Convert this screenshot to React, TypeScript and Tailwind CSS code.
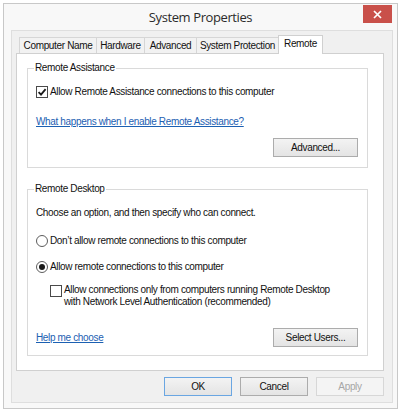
import React from 'react';

function CheckBox({ checked }: { checked?: boolean }) {
  return (
    <span className="flex h-[12px] w-[12px] shrink-0 items-center justify-center border border-[#4a4a4a] bg-white">
      {checked && (
        <svg width="10" height="10" viewBox="0 0 10 10">
          <path d="M1.6 5.1 L4 7.6 L8.6 2.1" fill="none" stroke="#1a1a1a" strokeWidth="1.8" />
        </svg>
      )}
    </span>
  );
}

function Radio({ checked }: { checked?: boolean }) {
  return (
    <span className="flex h-[12px] w-[12px] shrink-0 items-center justify-center rounded-full border border-[#5c5c5c] bg-white">
      {checked && <span className="h-[6px] w-[6px] rounded-full bg-[#1a1a1a]" />}
    </span>
  );
}

function Button({ label, className }: { label: string; className: string }) {
  return (
    <div className={`flex h-[19px] items-center justify-center border ${className}`}>
      {label}
    </div>
  );
}

const btn = 'border-[#acacac] bg-linear-to-b from-[#f3f3f3] to-[#e4e4e4]';

function Tab({ label, className }: { label: string; className: string }) {
  return (
    <div className={`-ml-px flex h-[16px] items-center justify-center border border-b-0 border-[#d6d6d6] bg-[#f2f2f2] first:ml-0 ${className}`}>
      {label}
    </div>
  );
}

export default function App() {
  return (
    <div className="h-[412px] w-[400px] bg-white pl-[3px] pt-[3px] font-['Liberation_Sans',Arial,sans-serif] text-[10px] leading-[12px] tracking-[-0.35px] text-[#111]">
      <div className="flex h-[406px] w-[395px] flex-col border border-[#c8c8c8] bg-[#f8f8f8]">
        {/* title bar */}
        <div className="grid h-[26px] grid-cols-[1fr_auto_1fr]">
          <div />
          <div className="self-center font-['Open_Sans',sans-serif] text-[13px] leading-[18px] tracking-[-0.4px] text-[#2b2b2b]">
            System Properties
          </div>
          <div className="flex justify-end pr-[5px] pt-[1px]">
            <div className="flex h-[18px] w-[29px] items-center justify-center bg-[#c9504a]">
              <svg width="9" height="9" viewBox="0 0 9 9">
                <path d="M1 1 L8 8 M8 1 L1 8" stroke="white" strokeWidth="1.7" />
              </svg>
            </div>
          </div>
        </div>

        {/* client area */}
        <div className="mb-[5px] ml-[7px] mr-[4px] flex flex-1 flex-col border border-[#dedede] bg-[#f0f0f0] pl-[4px] pt-[4px]">
          {/* tabs */}
          <div className="flex h-[18px] items-end pl-[3px]">
            <Tab label="Computer Name" className="w-[78px]" />
            <Tab label="Hardware" className="w-[49px]" />
            <Tab label="Advanced" className="w-[53px]" />
            <Tab label="System Protection" className="w-[83px]" />
            <div className="relative z-10 -mb-px -ml-px flex h-[19px] w-[45px] items-center justify-center border border-b-0 border-[#d0d0d0] bg-white pb-[2px]">
              Remote
            </div>
          </div>

          {/* panel */}
          <div className="h-[318px] w-[368px] border border-[#d0d0d0] bg-white pl-[10px] pt-[8px]">
            <fieldset className="h-[106px] w-[341px] border border-[#dadada]">
              <legend className="ml-[6px] px-[1px] leading-[12px]">Remote Assistance</legend>
              <div className="mt-[12px] flex items-center gap-[2px] pl-[8px]">
                <CheckBox checked />
                <span>Allow Remote Assistance connections to this computer</span>
              </div>
              <div className="mt-[18px] pl-[8px]">
                <span className="text-[#1c60b2] underline">What happens when I enable Remote Assistance?</span>
              </div>
              <div className="mt-[10px] flex justify-end pr-[9px]">
                <Button label="Advanced..." className={`w-[85px] ${btn}`} />
              </div>
            </fieldset>

            <fieldset className="mt-[15px] h-[173px] w-[341px] border border-[#dadada]">
              <legend className="ml-[6px] px-[1px] leading-[12px]">Remote Desktop</legend>
              <div className="mt-[12px] pl-[8px]">Choose an option, and then specify who can connect.</div>
              <div className="mt-[16px] flex items-center gap-[2px] pl-[8px]">
                <Radio />
                <span>Don’t allow remote connections to this computer</span>
              </div>
              <div className="mt-[14px] flex items-center gap-[2px] pl-[8px]">
                <Radio checked />
                <span>Allow remote connections to this computer</span>
              </div>
              <div className="mt-[11px] flex items-start gap-[2px] pl-[22px]">
                <span className="mt-[1px]">
                  <CheckBox />
                </span>
                <span>
                  Allow connections only from computers running Remote Desktop
                  <br />
                  with Network Level Authentication (recommended)
                </span>
              </div>
              <div className="mt-[20px] flex items-center justify-between pl-[8px] pr-[9px]">
                <span className="text-[#1c60b2] underline">Help me choose</span>
                <Button label="Select Users..." className={`w-[85px] ${btn}`} />
              </div>
            </fieldset>
          </div>

          {/* dialog buttons */}
          <div className="mt-[6px] flex w-[368px] justify-end gap-[8px]">
            <Button label="OK" className="w-[68px] border-[#6aa6e2] bg-linear-to-b from-[#f3f3f3] to-[#e4e4e4]" />
            <Button label="Cancel" className={`w-[68px] ${btn}`} />
            <Button label="Apply" className="w-[68px] border-[#d7d7d7] bg-[#f4f4f4] text-[#a6a6a6]" />
          </div>
        </div>
      </div>
    </div>
  );
}
